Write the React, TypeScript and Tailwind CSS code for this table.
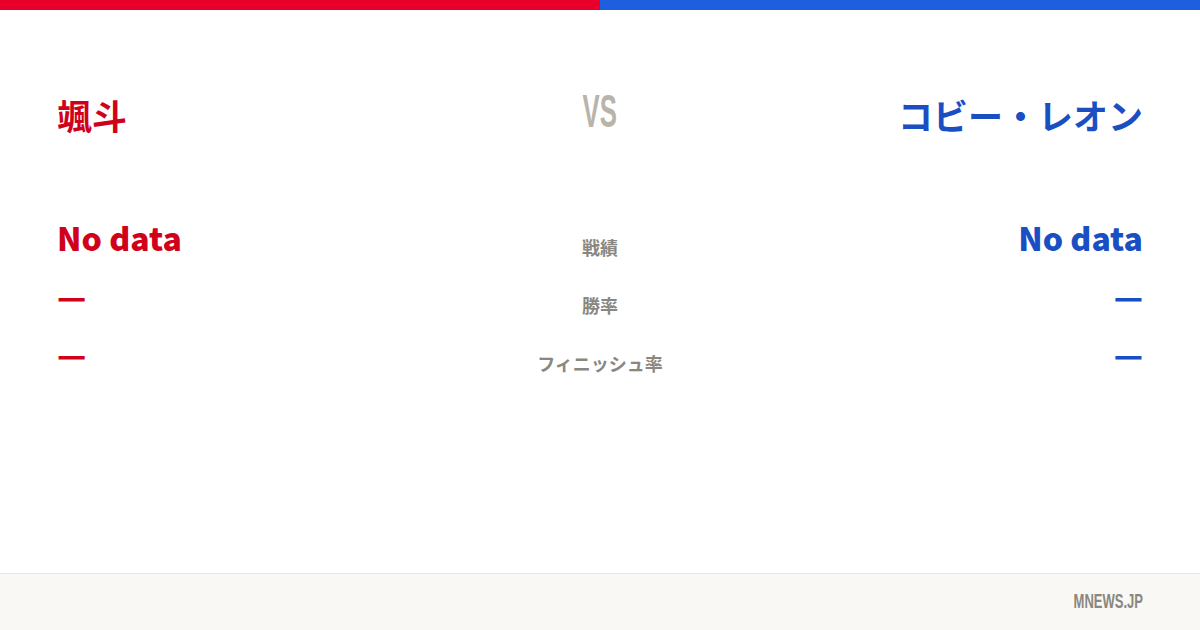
const stats = [
  { label: '戦績', left: 'No data', right: 'No data' },
  { label: '勝率', left: '—', right: '—' },
  { label: 'フィニッシュ率', left: '—', right: '—' },
];

const jp = { fontFamily: '"Noto Sans CJK JP", "Noto Sans", sans-serif' };
const cond = { fontFamily: '"Liberation Sans", Arial, sans-serif' };

export default function App() {
  return (
    <div className="w-[1200px] h-[630px] bg-white flex flex-col overflow-hidden" style={jp}>
      <div className="flex h-[10px] shrink-0">
        <div className="flex-1 bg-[#e8002a]" />
        <div className="flex-1 bg-[#1e5fdf]" />
      </div>

      <div className="flex-1 px-[57px] pt-[84px]">
        <div className="grid grid-cols-[1fr_auto_1fr] items-center">
          <div className="text-[35px] font-bold leading-none text-[#d0021b]">颯斗</div>
          <div className="text-[46px] font-bold leading-none text-[#b8b4aa] -mt-[10px]">
            <span className="inline-block scale-x-[0.56]" style={cond}>VS</span>
          </div>
          <div className="text-[35px] font-bold leading-none text-[#1a4fc4] text-right">コビー・レオン</div>
        </div>

        <div className="mt-[75px] flex flex-col">
          {stats.map((s) => (
            <div key={s.label} className="grid grid-cols-[1fr_auto_1fr] items-center h-[58px]">
              <div className="text-[32px] font-black leading-none text-[#d0021b] -mt-[2px]">{s.left}</div>
              <div className="text-[18px] font-bold text-[#8a8780] text-center pt-[18px]">{s.label}</div>
              <div className="text-[32px] font-black leading-none text-[#1a4fc4] text-right -mt-[2px]">{s.right}</div>
            </div>
          ))}
        </div>
      </div>

      <div className="h-[57px] shrink-0 bg-[#f9f8f5] border-t border-[#e8e6e0] flex items-center justify-end px-[57px]">
        <span className="text-[21px] font-bold leading-none text-[#8a877f] inline-block scale-x-[0.62] origin-right -mt-[3px]" style={cond}>
          MNEWS.JP
        </span>
      </div>
    </div>
  );
}
